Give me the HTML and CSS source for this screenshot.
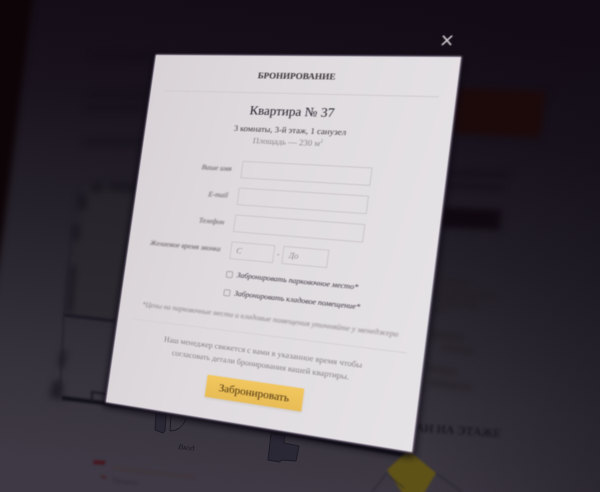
FILE: index.html
```
<!DOCTYPE html>
<html lang="ru">
<head>
<meta charset="utf-8">
<title>Бронирование</title>
<meta name="viewport" content="width=device-width, initial-scale=1">
<link rel="stylesheet" href="styles.css">
</head>
<body>
<svg class="backdrop" viewBox="0 0 600 492" preserveAspectRatio="xMidYMid slice" aria-hidden="true">
  <defs>
    <linearGradient id="night" x1="0.6" y1="0" x2="0.45" y2="1">
      <stop offset="0" stop-color="#130b15"/>
      <stop offset="0.25" stop-color="#19131d"/>
      <stop offset="0.5" stop-color="#25212a"/>
      <stop offset="0.78" stop-color="#35313a"/>
      <stop offset="1" stop-color="#3e3944"/>
    </linearGradient>
    <linearGradient id="shade" x1="0" y1="0" x2="1" y2="0">
      <stop offset="0.7" stop-color="#100c16" stop-opacity="0"/>
      <stop offset="1" stop-color="#100c16" stop-opacity="0.35"/>
    </linearGradient>
    <filter id="soft" color-interpolation-filters="sRGB"><feGaussianBlur stdDeviation="1"/></filter>
    <filter id="softer" x="-20%" y="-20%" width="140%" height="140%" color-interpolation-filters="sRGB"><feGaussianBlur stdDeviation="3"/></filter>
  </defs>
  <rect width="600" height="492" fill="url(#night)"/>
  <rect width="600" height="492" fill="url(#shade)"/>
  <path d="M-10-10H34L4 225-10 320z" fill="#0d0407" filter="url(#softer)"/>
  <g filter="url(#softer)">
    <path d="M455 88L546 91 540 138 448 133z" fill="#1c0a0b"/>
    <path d="M440 207L501 210 500 230 438 227z" fill="#100811"/>
    <path d="M92 56h70M88 95h62M86 108h60M84 142h58" stroke="#0f0a12" stroke-width="5" opacity="0.4"/>
    <path d="M86 185L141 188 115 321 66 315z" fill="#2a282b" opacity="0.5"/>
    <path d="M92 182l12 1-2 10-12-1zM110 182l30 2-2 9-30-2zM78 193l9 1-1 16-9-1zM73 224l7 1-1 16-7-1zM70 265l6 1-4 48-6-1zM61 350l6 1-3 17-6-1zM54 380l8 1 1 19-14-3z" fill="#17131c" opacity="0.7"/>
    <path d="M438 281l30 3M436 292l60 5M436 300l42 5M434 309l12 1M430 334l34 4M442 347l32 5M426 368l31 5M428 382l44 6" stroke="#231d21" stroke-width="5" opacity="0.6"/>
    <path d="M448 173l62 2M446 185l58 3" stroke="#110c14" stroke-width="4" opacity="0.7"/>
  </g>
  <g filter="url(#soft)">
    <path d="M64 315L115 321" fill="none" stroke="#1c1823" stroke-width="3"/>
    <path d="M73 225L64 315 60 390" fill="none" stroke="#211d28" stroke-width="2" opacity="0.6"/>
    <path d="M62 398L160 410 412 456" fill="none" stroke="#111019" stroke-width="4"/>
    <path d="M92 401v-9l14 2" fill="none" stroke="#1b1822" stroke-width="2"/>
    <path d="M94 460l12 1-2 4-11-1z" fill="#461720"/>
    <path d="M101 475l5 1v3l-5-1z" fill="#42262d"/>
    <text class="legend" transform="translate(113 470) rotate(6)" fill="#463533">Забронированные квартиры</text>
    <text class="legend" transform="translate(112 482) rotate(6)" fill="#302b36">Продано</text>
    <text class="floor" transform="translate(397 430) rotate(4)" fill="#1b1820">План на этаже</text>
    <path d="M408 450L436 473 420 500H407L387 470z" fill="#5f5217"/>
    <path d="M387 473L372 492M436 473L462 492M389 476l15 12" fill="none" stroke="#24212b" stroke-width="1"/>
  </g>
  <path d="M156 412l-1 18 8 3 2-2 1-17M271 434l-3 26 12 2 1-2 15 1 3-15-15-3 1-8z" fill="#2b2836" stroke="#1d1a26" stroke-width="1"/>
  <path d="M171 415l-1 16q11 0 16-12" fill="none" stroke="#1d1a26" stroke-width="1"/>
  <text class="entry" transform="translate(178 449) rotate(7)" fill="#1b1823">Вход</text>
</svg>

<main class="scene">
  <section class="dialog" role="dialog" aria-labelledby="dialog-title">
    <button class="close" type="button" aria-label="Закрыть">
      <svg viewBox="0 0 24 24" aria-hidden="true"><path d="M4 3L20 21M20 3L4 21"/></svg>
    </button>
    <header class="dialog-head"><h1 id="dialog-title">БРОНИРОВАНИЕ</h1></header>
    <div class="flat">
      <h2>Квартира № 37</h2>
      <p class="rooms">3 комнаты, 3-й этаж, 1 санузел</p>
      <p class="area">Площадь — 230 м<sup>2</sup></p>
    </div>
    <form class="form">
      <div class="row"><label for="name">Ваше имя</label><input class="field" id="name" type="text"></div>
      <div class="row"><label for="email">E-mail</label><input class="field" id="email" type="email"></div>
      <div class="row"><label for="phone">Телефон</label><input class="field" id="phone" type="tel"></div>
      <div class="row">
        <label for="from">Желаемое время звонка</label>
        <div class="range">
          <input class="field" id="from" type="text" placeholder="С">
          <span>-</span>
          <input class="field" id="to" type="text" placeholder="До" aria-label="До">
        </div>
      </div>
      <div class="options">
        <label><input type="checkbox">Забронировать парковочное место*</label>
        <label><input type="checkbox">Забронировать кладовое помещение*</label>
      </div>
      <p class="note">*Цены на парковочные места и кладовые помещения уточняйте у менеджера</p>
      <div class="final">
        <p>Наш менеджер свяжется с вами в указанное время чтобы<br>согласовать детали бронирования вашей квартиры.</p>
        <button class="submit" type="submit">Забронировать</button>
      </div>
    </form>
  </section>
</main>
</body>
</html>
```
FILE: styles.css
```
* { box-sizing: border-box; }

body {
  margin: 0;
  min-height: 100vh;
  background: #1d1822;
  font-family: "Liberation Serif", serif;
  color: #3b3638;
  text-rendering: geometricPrecision;
}

h1, h2, p { margin: 0; }

.backdrop {
  position: absolute;
  inset: 0;
  width: 100%;
  height: 100%;
}

.legend { font-size: 7px; }
.floor { font-size: 12px; font-weight: bold; text-transform: uppercase; }
.entry { font-size: 8px; font-style: italic; }

.scene {
  position: relative;
  height: 100vh;
  overflow: hidden;
}

/* The card is laid out flat and tilted in space as one plane. */
.dialog {
  position: relative;
  width: 100%;
  padding: 0 30px 42px;
  background: linear-gradient(100deg, #d9d3d7, #dfdbdf 40%, #e6e3e7);
  box-shadow: 0 0 4px 1px #b9a9c4, 0 5px 14px 4px #0b0811;
  filter: blur(1px);
  transform-origin: 0 0;
  transform: matrix3d(0.417133, -0.0079433, 0, -0.00019783, -0.070758, 0.456818, 0, -0.0000301, 0, 0, 1, 0, 156, 55, 0, 1);
}

.close {
  position: absolute;
  top: -44px;
  right: 16px;
  width: 24px;
  height: 24px;
  padding: 0;
  border: 0;
  background: none;
}

.close svg { display: block; width: 100%; }
.close path { fill: none; stroke: #cfc9cf; stroke-width: 3; }

.dialog-head {
  padding: 26px 0 20px;
  border-bottom: 2px solid #d0cbcf;
  text-align: center;
}

h1 { font-size: 18px; line-height: 30px; color: #3a3438; }

.flat { padding-top: 16px; text-align: center; }
h2 { font-size: 26px; font-weight: normal; line-height: 40px; color: #25202a; }
.rooms { padding-top: 6px; font-size: 17px; line-height: 24px; color: #3c363c; }
.area { font-size: 17px; line-height: 24px; color: #8a8488; }
sup { font-size: 10px; line-height: 0; }

.form {
  display: grid;
  grid-template-columns: minmax(0, 1fr);
  gap: 19px;
  padding-top: 30px;
}

.row {
  display: grid;
  grid-template-columns: 166px 252px;
  gap: 20px;
  align-items: center;
}

.row label {
  justify-self: end;
  font-size: 15px;
  font-style: italic;
  white-space: nowrap;
  color: #575154;
  filter: blur(1px);
}

.field {
  width: 100%;
  height: 36px;
  padding: 0 10px;
  border: 2px solid #cbc6c8;
  background: transparent;
  font: italic 17px "Liberation Serif", serif;
}

.field::placeholder { color: #938d91; opacity: 1; }

.range {
  display: grid;
  grid-template-columns: 88px 16px 88px;
  align-items: center;
  text-align: center;
  color: #8c868a;
}

.options {
  display: grid;
  gap: 13px;
  padding-left: 184px;
}

.options label {
  display: flex;
  align-items: center;
  gap: 8px;
  font-size: 15px;
  font-style: italic;
  line-height: 24px;
  white-space: nowrap;
  color: #3a323c;
}

.options input {
  appearance: none;
  width: 14px;
  height: 14px;
  margin: 0;
  border: 2px solid #b0aaad;
  border-radius: 3px;
  background: #dedadc;
}

.note {
  font-size: 15px;
  font-style: italic;
  line-height: 24px;
  text-align: center;
  white-space: nowrap;
  color: #878185;
  filter: blur(1px);
}

.final {
  padding-top: 20px;
  border-top: 2px solid #d6d1d5;
  text-align: center;
}

.final p { font-size: 16px; line-height: 25px; color: #858083; }

.submit {
  width: 190px;
  height: 44px;
  margin-top: 21px;
  border: 0;
  background: linear-gradient(#f2c75f, #e9bc55);
  box-shadow: 0 2px 5px #cfc6c0;
  font: 22px "Liberation Serif", serif;
  color: #4f3510;
}
```
